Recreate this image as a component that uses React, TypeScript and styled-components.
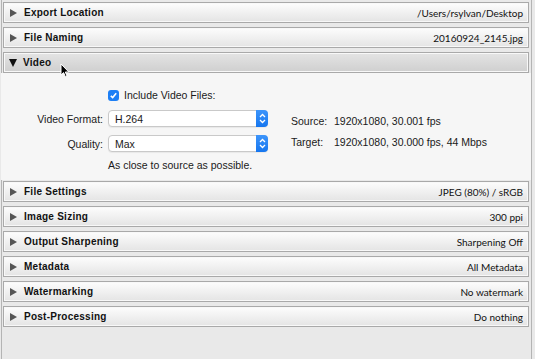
import React from 'react';
import styled, { createGlobalStyle } from 'styled-components';

const GlobalStyle = createGlobalStyle`
  html, body {
    margin: 0;
    padding: 0;
    background: #e9e9e9;
  }
  body {
    width: 535px;
    height: 359px;
    overflow: hidden;
  }
`;

interface ISection {
  title: string;
  value?: string;
  open?: boolean;
}

const topSections: ISection[] = [
  { title: 'Export Location', value: '/Users/rsylvan/Desktop' },
  { title: 'File Naming', value: '20160924_2145.jpg' },
  { title: 'Video', open: true }
];

const bottomSections: ISection[] = [
  { title: 'File Settings', value: 'JPEG (80%) / sRGB' },
  { title: 'Image Sizing', value: '300 ppi' },
  { title: 'Output Sharpening', value: 'Sharpening Off' },
  { title: 'Metadata', value: 'All Metadata' },
  { title: 'Watermarking', value: 'No watermark' },
  { title: 'Post-Processing', value: 'Do nothing' }
];

const Panel = styled.div`
  position: relative;
  margin-left: 1px;
  width: 531px;
  height: 359px;
  border-left: 1px solid #b4b4b4;
  border-right: 1px solid #b4b4b4;
  background: #e9e9e9;
  padding-top: 2px;
  box-sizing: border-box;
`;

const Header = styled.div<{ $open?: boolean }>`
  display: flex;
  align-items: center;
  height: 21px;
  margin: 0 2px ${(p) => (p.$open ? '0' : '4px')} 1px;
  padding: 0 5px 0 6px;
  box-sizing: border-box;
  border: 1px solid #a9a9a9;
  box-shadow: inset 0 0 0 1px #f8f8f8;
  background: ${(p) =>
    p.$open ? 'linear-gradient(#e4e4e4, #cfcfcf)' : 'linear-gradient(#fdfdfd, #e4e4e4)'};
`;

const Arrow = styled.span<{ $open?: boolean }>`
  width: 0;
  height: 0;
  ${(p) =>
    p.$open
      ? `border-left: 4.5px solid transparent;
         border-right: 4.5px solid transparent;
         border-top: 8px solid #111;
         margin: 0 6px 0 -1px;`
      : `border-top: 4.5px solid transparent;
         border-bottom: 4.5px solid transparent;
         border-left: 7px solid #555;
         margin: 0 7px 0 0;`}
`;

const Title = styled.span`
  flex: 1;
  font-family: 'Liberation Sans', Arial, sans-serif;
  font-weight: bold;
  font-size: 10px;
  color: #111;
  letter-spacing: 0.25px;
`;

const Value = styled.span`
  font-family: Lato, 'Liberation Sans', sans-serif;
  font-size: 10px;
  color: #111;
`;

const Body = styled.div`
  height: 107px;
  margin: 0 0 1px -1px;
  background: #f6f6f6;
  display: flex;
  padding: 14px 0 0 0;
  box-sizing: border-box;
  font-family: 'Liberation Sans', Arial, sans-serif;
  font-size: 10.5px;
  color: #1a1a1a;
  white-space: nowrap;
`;

const FormGrid = styled.div`
  display: grid;
  grid-template-columns: 102px 160px;
  column-gap: 5px;
  row-gap: 8px;
  align-items: center;
  align-content: start;
`;

const Label = styled.span`
  grid-column: 1;
  text-align: right;
`;

const CheckRow = styled.label`
  grid-column: 2;
  display: flex;
  align-items: center;
  gap: 5px;
  height: 16px;
  margin-bottom: -1px;
`;

const Check = styled.span`
  width: 11px;
  height: 11px;
  border-radius: 3px;
  background: #1d7ff5;
  display: flex;
  align-items: center;
  justify-content: center;
`;

const Select = styled.div`
  grid-column: 2;
  display: flex;
  align-items: center;
  height: 17px;
  border: 1px solid #c9c9c9;
  border-radius: 4px;
  background: #fff;
  box-sizing: border-box;
  padding-left: 6px;
  box-shadow: 0 1px 1px rgba(0, 0, 0, 0.06);
`;

const SelectText = styled.span`
  flex: 1;
`;

const Stepper = styled.span`
  width: 12px;
  height: 17px;
  margin-right: -1px;
  border-radius: 0 4px 4px 0;
  background: linear-gradient(#3d95fb, #1676ef);
  display: flex;
  align-items: center;
  justify-content: center;
`;

const Note = styled.span`
  grid-column: 2;
  margin-top: -1px;
`;

const InfoCol = styled.div`
  margin: 28px 0 0 23px;
  display: grid;
  grid-template-columns: 43px auto;
  row-gap: 9px;
  align-content: start;
`;

const Cursor = styled.svg`
  position: absolute;
  left: 58px;
  top: 63px;
`;

const StepperIcon = () => (
  <svg width="7" height="11" viewBox="0 0 7 11">
    <path d="M1 4 L3.5 1.5 L6 4 M1 7 L3.5 9.5 L6 7" fill="none" stroke="#fff" strokeWidth="1.3" />
  </svg>
);

const SectionHeader = ({ title, value, open }: ISection) => (
  <Header $open={open}>
    <Arrow $open={open} />
    <Title>{title}</Title>
    {value && <Value>{value}</Value>}
  </Header>
);

const App = () => {
  return (
    <Panel>
      <GlobalStyle />
      {topSections.map((s) => (
        <SectionHeader key={s.title} {...s} />
      ))}
      <Body>
        <FormGrid>
          <CheckRow>
            <Check>
              <svg width="9" height="9" viewBox="0 0 9 9">
                <path d="M1.8 4.8 L3.7 6.6 L7.2 2.2" fill="none" stroke="#fff" strokeWidth="1.6" />
              </svg>
            </Check>
            Include Video Files:
          </CheckRow>
          <Label>Video Format:</Label>
          <Select>
            <SelectText>H.264</SelectText>
            <Stepper>
              <StepperIcon />
            </Stepper>
          </Select>
          <Label>Quality:</Label>
          <Select>
            <SelectText>Max</SelectText>
            <Stepper>
              <StepperIcon />
            </Stepper>
          </Select>
          <Note>As close to source as possible.</Note>
        </FormGrid>
        <InfoCol>
          <span>Source:</span>
          <span>1920x1080, 30.001 fps</span>
          <span>Target:</span>
          <span>1920x1080, 30.000 fps, 44 Mbps</span>
        </InfoCol>
      </Body>
      {bottomSections.map((s) => (
        <SectionHeader key={s.title} {...s} />
      ))}
      <Cursor width="10" height="16" viewBox="0 0 10 16">
        <path d="M1 1 L1 12 L3.6 9.6 L5.4 13.8 L7 13.1 L5.3 9 L8.8 9 Z" fill="#000" stroke="#fff" strokeWidth="1" />
      </Cursor>
    </Panel>
  );
};

export default App;
